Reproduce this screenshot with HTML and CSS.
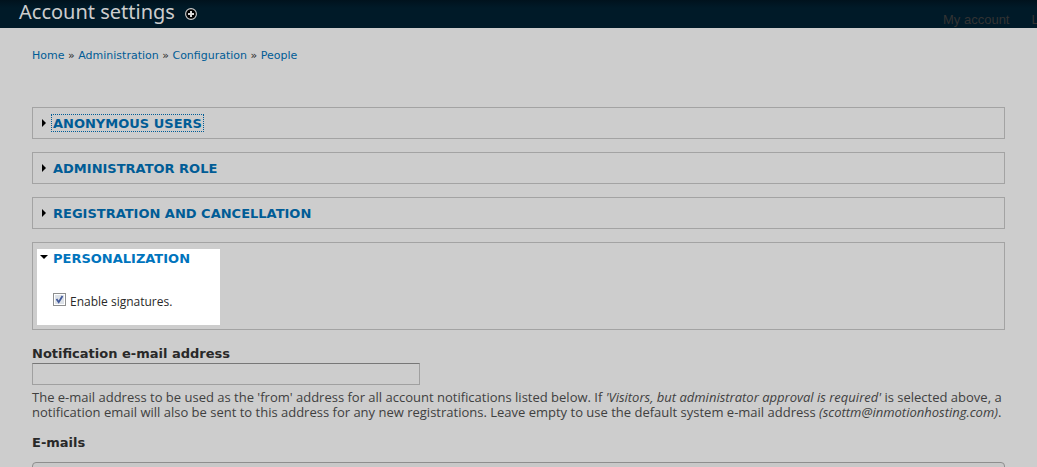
FILE: index.html
```html
<!DOCTYPE html>
<html lang="en">
<head>
<meta charset="utf-8">
<title>Account settings</title>
<link rel="stylesheet" href="styles.css">
</head>
<body>
<header class="branding">
  <h1 class="page-title">Account settings</h1>
  <a class="add-shortcut" href="#" aria-label="Add to shortcuts">
    <svg width="12" height="12" viewBox="0 0 12 12"><circle cx="6" cy="6" r="5.4" fill="#000" stroke="#cdcdcd" stroke-width="1.1"/><path d="M6 3v6M3 6h6" stroke="#d8d8d8" stroke-width="2"/></svg>
  </a>
  <nav class="user-menu">
    <a href="#">My account</a>
    <a href="#">Log out</a>
  </nav>
</header>
<main class="content">
  <nav class="breadcrumb"><a href="#">Home</a> » <a href="#">Administration</a> » <a href="#">Configuration</a> » <a href="#">People</a></nav>
  <form class="settings">
    <section class="panel"><svg class="arrow" viewBox="0 0 8 8"><path d="M2 0v8l4-4z"/></svg><a class="legend focused" href="#">ANONYMOUS USERS</a></section>
    <section class="panel"><svg class="arrow" viewBox="0 0 8 8"><path d="M2 0v8l4-4z"/></svg><a class="legend" href="#">ADMINISTRATOR ROLE</a></section>
    <section class="panel"><svg class="arrow" viewBox="0 0 8 8"><path d="M2 0v8l4-4z"/></svg><a class="legend" href="#">REGISTRATION AND CANCELLATION</a></section>
    <section class="panel-open">
      <div class="highlight">
        <div class="panel-head"><svg class="arrow" viewBox="0 0 8 8"><path d="M0 1h8L4 5z"/></svg><a class="legend" href="#">PERSONALIZATION</a></div>
        <div class="check-row"><input class="check" type="checkbox" id="signatures" checked><label for="signatures">Enable signatures.</label></div>
      </div>
    </section>
    <label class="field-label" for="mail">Notification e-mail address</label>
    <input class="field" type="text" id="mail">
    <p class="description">The e-mail address to be used as the 'from' address for all account notifications listed below. If <em>'Visitors, but administrator approval is required'</em> is selected above, a notification email will also be sent to this address for any new registrations. Leave empty to use the default system e-mail address <em>(scottm@inmotionhosting.com)</em>.</p>
    <h2 class="group-title">E-mails</h2>
    <div class="tabs"></div>
  </form>
</main>
</body>
</html>
```
FILE: styles.css
```css
* { box-sizing: border-box; }
html { background: #cdcdcd; }
body {
  margin: 0;
  height: 100vh;
  overflow: hidden;
  background: #cdcdcd;
  color: #292929;
  font: 12px/15px "Open Sans", "Noto Sans", sans-serif;
}
a { color: #005c96; text-decoration: none; }
.branding {
  display: flex;
  height: 28px;
  padding-left: 19px;
  background: linear-gradient(#00121d, #001a28 8px);
}
.page-title {
  margin: 0;
  color: #cdcdcd;
  font-family: "Noto Sans", "Open Sans", sans-serif;
  font-size: 20px;
  font-weight: 400;
  line-height: 24px;
}
.add-shortcut { margin: 8px 0 0 10px; height: 12px; }
.add-shortcut svg { display: block; }
.user-menu {
  display: flex;
  flex: none;
  gap: 22px;
  width: 94px;
  height: 28px;
  margin-left: auto;
  overflow: hidden;
  white-space: nowrap;
  font: 13px/16px "Liberation Sans", Arial, sans-serif;
  padding-top: 12px;
}
.user-menu a { flex: none; color: #333; }
.content { padding: 20px 32px 0; }
.breadcrumb {
  margin-bottom: 44px;
  font-family: "DejaVu Sans", Verdana, sans-serif;
  font-size: 11px;
}
.panel {
  display: flex;
  align-items: center;
  height: 32px;
  margin-bottom: 13px;
  padding-left: 7px;
  border: 1px solid #a3a3a3;
}
.arrow { width: 8px; height: 8px; flex: none; margin-right: 3px; fill: #000; }
.legend, .field-label, .group-title {
  font-family: "DejaVu Sans", Verdana, sans-serif;
  font-size: 13px;
  font-weight: 700;
}
.legend {
  padding: 2px 1px 0;
  border: 1px solid transparent;
  line-height: 14px;
}
.focused { border: 1px dotted #005c96; }
.panel-open {
  padding: 6px 4px 4px;
  margin-bottom: 15px;
  border: 1px solid #a3a3a3;
}
.highlight {
  width: 183px;
  height: 76px;
  background: #fff;
}
.panel-head { display: flex; align-items: center; padding-left: 3px; }
.panel-head .legend { color: #0074bd; }
.check-row {
  display: flex;
  align-items: flex-start;
  gap: 4px;
  padding: 26px 0 0 16px;
}
.check-row label { padding-top: 1px; }
.check {
  appearance: none;
  width: 13px;
  height: 13px;
  margin: 0;
  border: 1px solid #8e8f8f;
  background: url("data:image/svg+xml,%3Csvg xmlns='http://www.w3.org/2000/svg' viewBox='0 0 11 11'%3E%3Crect x='1' y='1' width='9' height='9' fill='%23dde2e8'/%3E%3Cpath d='M2.5 5l2.2 3.2L8.5 2' fill='none' stroke='%23435a9b' stroke-width='1.8'/%3E%3C/svg%3E") center / 11px 11px #fff;
}
.field-label {
  display: block;
  line-height: 18px;
}
.field {
  display: block;
  width: 388px;
  max-width: 100%;
  height: 22px;
  border: 1px solid #a0a0a0;
  border-top-color: #777;
  background: #cdcdcd;
}
.description { margin: 5px 0 15px; font-size: 13px; color: #404040; }
.group-title { margin: 0 0 12px; line-height: 15px; }
.tabs {
  height: 40px;
  border: 1px solid #8e8e8e;
  border-radius: 4px 4px 0 0;
  background: #c8c8c8;
}
```
